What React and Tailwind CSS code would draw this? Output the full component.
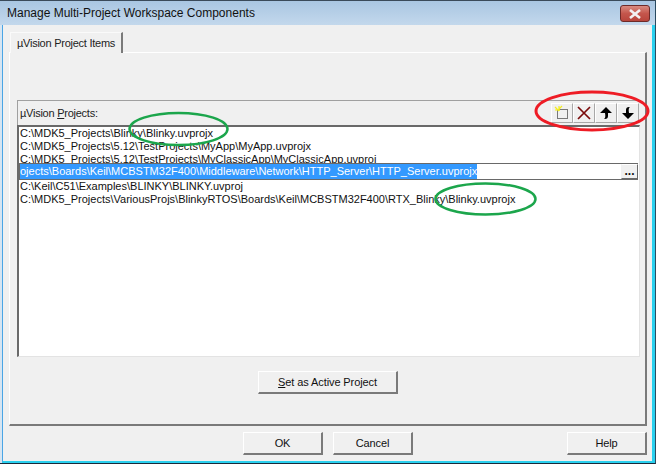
const font = { fontFamily: '"Liberation Sans", Arial, sans-serif' };

function Btn({ children, className = "" }) {
  return (
    <div className={`flex items-center justify-center bg-[#f0f0f0] text-[11px] tracking-[-0.1px] text-[#111] border border-t-white border-l-white border-r-2 border-b-2 border-r-[#7a7a7a] border-b-[#7a7a7a] ${className}`}>
      {children}
    </div>
  );
}

function ToolBtn({ children }) {
  return (
    <div className="w-[22px] h-[20px] flex items-center justify-center bg-[#f0f0f0] border border-t-white border-l-white border-r-[#a8a8a8] border-b-[#a8a8a8]">
      {children}
    </div>
  );
}

const rowsTop = [
  "C:\\MDK5_Projects\\Blinky\\Blinky.uvprojx",
  "C:\\MDK5_Projects\\5.12\\TestProjects\\MyApp\\MyApp.uvprojx",
  "C:\\MDK5_Projects\\5.12\\TestProjects\\MyClassicApp\\MyClassicApp.uvproj",
];
const rowsBottom = [
  "C:\\Keil\\C51\\Examples\\BLINKY\\BLINKY.uvproj",
  "C:\\MDK5_Projects\\VariousProjs\\BlinkyRTOS\\Boards\\Keil\\MCBSTM32F400\\RTX_Blinky\\Blinky.uvprojx",
];

export default function App() {
  return (
    <div style={font} className="relative w-[656px] h-[464px] overflow-hidden flex flex-col bg-[#d6e5f2] border-t border-t-[#3a4a5a] border-r border-r-[#2a4a60] border-b border-b-[#1a2a3a] text-black">
      <div className="h-[24px] shrink-0 flex items-center justify-between pl-[7px] pr-[5px] bg-gradient-to-b from-[#a9c6e2] to-[#c3d8ec]">
        <span className="text-[12px] text-[#111]">Manage Multi-Project Workspace Components</span>
        <div className="w-[30px] h-[17px] self-start mt-[4px] rounded-[3px] border border-[#6e2a28] bg-gradient-to-b from-[#d98a80] via-[#c4564c] to-[#b8453c] flex items-center justify-center">
          <svg width="14" height="10" viewBox="0 0 14 10">
            <path d="M2 1 L12 9 M12 1 L2 9" stroke="#f2f2f2" strokeWidth="2.6" fill="none" />
          </svg>
        </div>
      </div>

      <div className="flex-1 min-h-0 flex flex-col ml-[2px] bg-[#f0f0f0] border-l border-l-[#4aa5e5] border-r-[3px] border-r-[#2ad0ee] border-b-2 border-b-[#2ad0ee]">
        <div className="pt-[7px] pl-[7px] flex items-end h-[27px] shrink-0">
          <div className="w-[113px] h-[21px] -mb-[1px] z-10 flex items-center pl-[6px] text-[11px] tracking-[-0.25px] whitespace-nowrap text-[#222] bg-[#f0f0f0] border border-b-0 border-t-[#fafafa] border-l-[#fafafa] border-r-2 border-r-[#7a7a7a]">
            µVision Project Items
          </div>
        </div>

        <div className="h-[374px] shrink-0 ml-[6px] mr-[5px] pt-[47px] pl-[7px] pr-[5px] flex flex-col border border-t-white border-l-white border-r-2 border-r-[#7a7a7a] border-b-2 border-b-[#7a7a7a]">
          <div className="h-[25px] shrink-0 flex items-center justify-between border-t border-t-[#a0a0a0] border-l border-l-[#a0a0a0] pl-[2px] pr-[1px]">
            <span className="text-[11px] tracking-[-0.25px] text-[#222]">µVision <u>P</u>rojects:</span>
            <div className="flex">
              <ToolBtn>
                <svg width="16" height="16" viewBox="0 0 16 16">
                  <rect x="3.5" y="4.5" width="10" height="9" fill="none" stroke="#000" strokeDasharray="1 1" />
                  <path d="M1 2 L5 6 M5 1 V6 M1 5 H6 M8 1 L4 5" stroke="#f4ee20" strokeWidth="1.2" fill="none" />
                </svg>
              </ToolBtn>
              <ToolBtn>
                <svg width="16" height="16" viewBox="0 0 16 16">
                  <path d="M2 2 L14 14 M14 2 L2 14" stroke="#7a0c0c" strokeWidth="1.7" fill="none" />
                </svg>
              </ToolBtn>
              <ToolBtn>
                <svg width="14" height="14" viewBox="0 0 14 14">
                  <path d="M7 1 L13 7 H9 V10 Q9 13 6 13 H5 Q7 12 6 7 H1 Z" fill="#000" />
                </svg>
              </ToolBtn>
              <ToolBtn>
                <svg width="14" height="14" viewBox="0 0 14 14">
                  <path d="M7 13 L1 7 H5 V4 Q5 1 8 1 H9 Q7 2 8 7 H13 Z" fill="#000" />
                </svg>
              </ToolBtn>
            </div>
          </div>

          <div className="h-[232px] shrink-0 bg-white border-t-2 border-t-[#696969] border-l-2 border-l-[#696969] border-r border-r-[#e3e3e3] border-b border-b-[#e3e3e3] text-[11px] leading-[13px] text-[#111]">
            {rowsTop.map((r) => (
              <div key={r} className="pl-[1px] h-[13px] whitespace-nowrap">{r}</div>
            ))}
            <div className="relative z-10 h-[17px] -mt-[3px] mr-[1px] flex bg-white border-y border-y-[#696969]">
              <div className="flex-1 min-w-0 overflow-hidden bg-white border-l border-l-[#696969] flex items-center">
                <span className="bg-[#3399ff] text-white whitespace-nowrap leading-[15px]">
                  ojects\Boards\Keil\MCBSTM32F400\Middleware\Network\HTTP_Server\HTTP_Server.uvprojx
                </span>
              </div>
              <div className="w-[17px] flex items-end justify-center bg-[#f0f0f0] border border-t-white border-l-[#f0f0f0] border-r-[#696969] border-b-[#696969] text-[12px] font-bold leading-[13px]">
                ...
              </div>
            </div>
            {rowsBottom.map((r) => (
              <div key={r} className="pl-[1px] h-[13px] whitespace-nowrap">{r}</div>
            ))}
          </div>

          <Btn className="w-[140px] h-[23px] mt-[14px] self-start ml-[241px]">
            <span><u>S</u>et as Active Project</span>
          </Btn>
        </div>

        <div className="flex items-start mt-[6px] pl-[240px] pr-[5px]">
          <Btn className="w-[80px] h-[23px] border-t-[#696969] border-l-[#696969]">OK</Btn>
          <Btn className="w-[80px] h-[23px] ml-[10px]">Cancel</Btn>
          <Btn className="w-[80px] h-[23px] ml-auto">Help</Btn>
        </div>
      </div>

      <svg className="absolute left-0 top-0 pointer-events-none" width="656" height="464">
        <ellipse cx="178.5" cy="128" rx="49" ry="16" fill="none" stroke="#1ca64c" strokeWidth="2.5" />
        <ellipse cx="485.5" cy="198" rx="50" ry="15.5" fill="none" stroke="#1ca64c" strokeWidth="2.5" />
        <ellipse cx="592" cy="110" rx="56" ry="19" fill="none" stroke="#ee1c25" strokeWidth="3" />
      </svg>
    </div>
  );
}
